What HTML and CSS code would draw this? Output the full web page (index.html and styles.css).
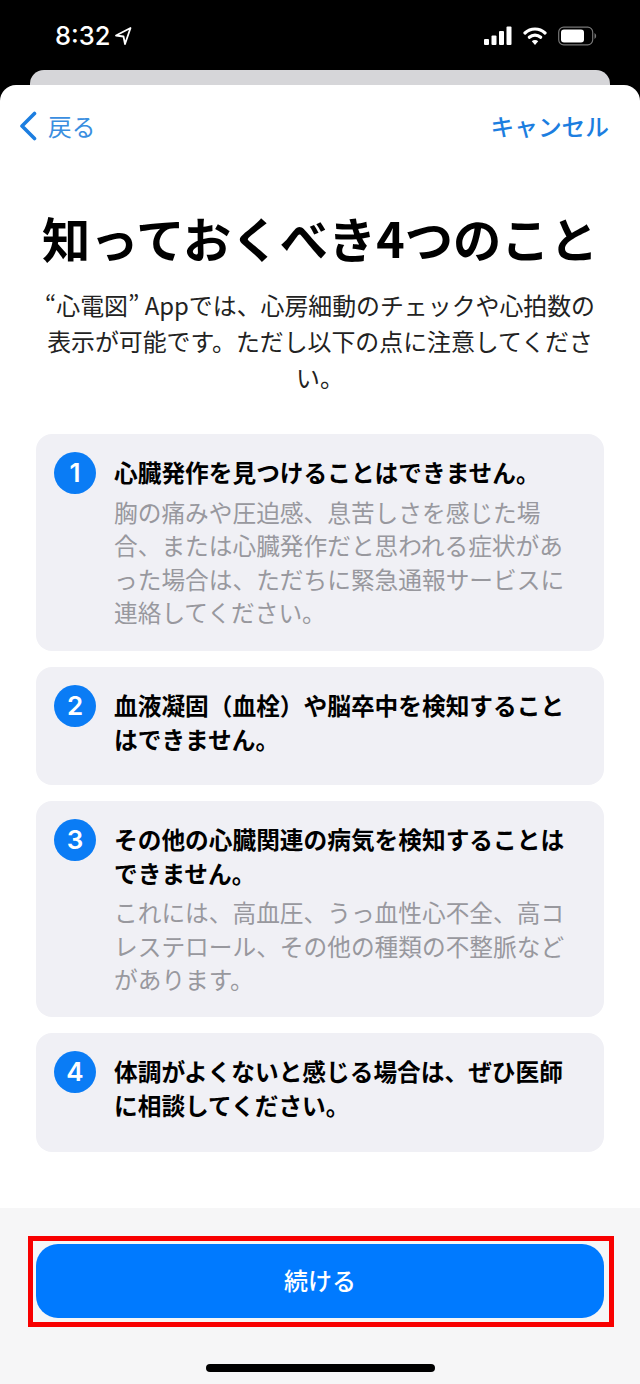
FILE: index.html
```html
<!DOCTYPE html>
<html lang="ja">
<head>
<meta charset="utf-8">
<title>知っておくべき4つのこと</title>
<link rel="stylesheet" href="styles.css">
</head>
<body>
<div class="status">
  <div class="status-left">
    <span class="time">8:32</span>
    <svg class="loc" width="18" height="20" viewBox="0 0 18 20"><path d="M16.5 2 L2 9.5 L9.5 10.5 L11 18 Z" fill="none" stroke="#fff" stroke-width="1.8" stroke-linejoin="round"/></svg>
  </div>
  <div class="status-right">
    <svg width="28" height="20" viewBox="0 0 28 20"><rect x="0" y="13" width="5" height="6" rx="1" fill="#fff"/><rect x="7.5" y="9.5" width="5" height="9.5" rx="1" fill="#fff"/><rect x="15" y="5" width="5" height="14" rx="1" fill="#fff"/><rect x="22.5" y="0.5" width="5" height="18.5" rx="1" fill="#fff"/></svg>
    <svg width="24" height="20" viewBox="0 0 24 20"><path d="M2 7 A14.5 14.5 0 0 1 22 7" fill="none" stroke="#fff" stroke-width="3.2" stroke-linecap="round"/><path d="M6.3 11.3 A8.5 8.5 0 0 1 17.7 11.3" fill="none" stroke="#fff" stroke-width="3.2" stroke-linecap="round"/><path d="M12 19 L8.8 15.3 A4.6 4.6 0 0 1 15.2 15.3 Z" fill="#fff"/></svg>
    <svg width="39" height="20" viewBox="0 0 39 20"><rect x="0.7" y="1.2" width="34" height="17.6" rx="5" fill="none" stroke="#777" stroke-width="1.2"/><rect x="3" y="3.5" width="23" height="13" rx="3" fill="#fff"/><path d="M36.5 7 A3.5 3.5 0 0 1 36.5 13 Z" fill="#777"/></svg>
  </div>
</div>
<div class="backdrop"></div>
<main class="sheet">
  <nav class="nav">
    <a class="back">
      <svg width="20" height="30" viewBox="0 0 20 30"><path d="M16.5 2.5 L4 15 L16.5 27.5" fill="none" stroke="#1c7ee0" stroke-width="3.6" stroke-linecap="round" stroke-linejoin="round"/></svg>
      <span>戻る</span>
    </a>
    <a class="cancel">キャンセル</a>
  </nav>
  <h1 class="title">知っておくべき4つのこと</h1>
  <p class="intro">“心電図” Appでは、心房細動のチェックや心拍数の表示が可能です。ただし以下の点に注意してください。</p>
  <section class="cards">
    <article class="card c1">
      <span class="num">1</span>
      <div class="card-text">
        <h2>心臓発作を見つけることはできません。</h2>
        <p>胸の痛みや圧迫感、息苦しさを感じた場合、または心臓発作だと思われる症状があった場合は、ただちに緊急通報サービスに連絡してください。</p>
      </div>
    </article>
    <article class="card c2">
      <span class="num">2</span>
      <div class="card-text">
        <h2>血液凝固（血栓）や脳卒中を検知することはできません。</h2>
      </div>
    </article>
    <article class="card c3">
      <span class="num">3</span>
      <div class="card-text">
        <h2>その他の心臓関連の病気を検知することはできません。</h2>
        <p>これには、高血圧、うっ血性心不全、高コレステロール、その他の種類の不整脈などがあります。</p>
      </div>
    </article>
    <article class="card c4">
      <span class="num">4</span>
      <div class="card-text">
        <h2>体調がよくないと感じる場合は、ぜひ医師に相談してください。</h2>
      </div>
    </article>
  </section>
  <footer class="footer">
    <div class="highlight"><button class="cta">続ける</button></div>
    <div class="home"></div>
  </footer>
</main>
</body>
</html>
```
FILE: styles.css
```css
* { box-sizing: border-box; }
html, body { margin: 0; padding: 0; }
body {
  width: 640px;
  height: 1384px;
  overflow: hidden;
  background: #000;
  display: flex;
  flex-direction: column;
  font-family: "Noto Sans CJK JP", "Noto Sans", sans-serif;
}
.status {
  height: 70px;
  padding: 0 43px 0 55px;
  display: flex;
  justify-content: space-between;
  align-items: flex-start;
  color: #fff;
}
.status-left { display: flex; align-items: center; gap: 4px; height: 72px; }
.status-right { display: flex; align-items: center; gap: 11px; height: 72px; }
.time { font: 500 25.5px/1 Inter, "Liberation Sans", sans-serif; }
.backdrop {
  height: 15px;
  margin: 0 30px;
  background: #d6d6d9;
  border-radius: 14px 14px 0 0;
}
.sheet {
  flex: 1;
  background: #fff;
  border-radius: 16px 16px 0 0;
  display: flex;
  flex-direction: column;
}
.nav {
  height: 82px;
  padding: 0 31px 0 18px;
  display: flex;
  justify-content: space-between;
  align-items: center;
  color: #1c7ee0;
  font-size: 23.7px;
}
.back { display: flex; align-items: center; gap: 10px; }
.back span { font-weight: 400; color: #3a8ee0; }
.cancel { font-weight: 500; }
.title {
  margin: 40px 0 0;
  text-align: center;
  font-size: 48.3px;
  line-height: 60px;
  font-weight: 700;
  color: #000;
}
.intro {
  margin: 20px 40px 0;
  text-align: center;
  font-size: 23.9px;
  line-height: 36px;
  color: #222;
}
.cards {
  margin: 39px 36px 0;
  display: flex;
  flex-direction: column;
  gap: 16px;
}
.card {
  background: #f0f0f5;
  border-radius: 16px;
  padding: 18px 30px 0 18px;
  display: flex;
  gap: 18px;
}
.c1 { height: 217px; }
.c2 { height: 118px; }
.c3 { height: 216px; }
.c4 { height: 119px; }
.num {
  flex: none;
  width: 42px;
  height: 42px;
  border-radius: 50%;
  background: #0a7cf5;
  color: #fff;
  display: flex;
  align-items: center;
  justify-content: center;
  font: 600 26px/1 Inter, "Liberation Sans", sans-serif;
}
.card-text { flex: 1; min-width: 0; }
.card h2 {
  margin: 4px 0 0;
  font-size: 23.7px;
  line-height: 33.5px;
  font-weight: 700;
  color: #000;
}
.card p {
  margin: 6px 0 0;
  font-size: 23.7px;
  line-height: 33.5px;
  color: #98989e;
}
.footer {
  margin-top: 56px;
  flex: 1;
  background: #f6f6f7;
  display: flex;
  flex-direction: column;
  align-items: center;
  padding-top: 28px;
}
.highlight {
  width: 586px;
  height: 91px;
  margin-left: 2px;
  border: 5px solid #f80000;
  padding: 3px 5px 3px 3px;
}
.cta {
  display: block;
  width: 100%;
  height: 74px;
  padding: 0 0 4px;
  border: 0;
  border-radius: 22px;
  background: #007aff;
  color: #fff;
  font-family: inherit;
  font-size: 24px;
  font-weight: 500;
}
.home {
  width: 229px;
  height: 8px;
  margin-top: 37px;
  border-radius: 4px;
  background: #000;
}
```
